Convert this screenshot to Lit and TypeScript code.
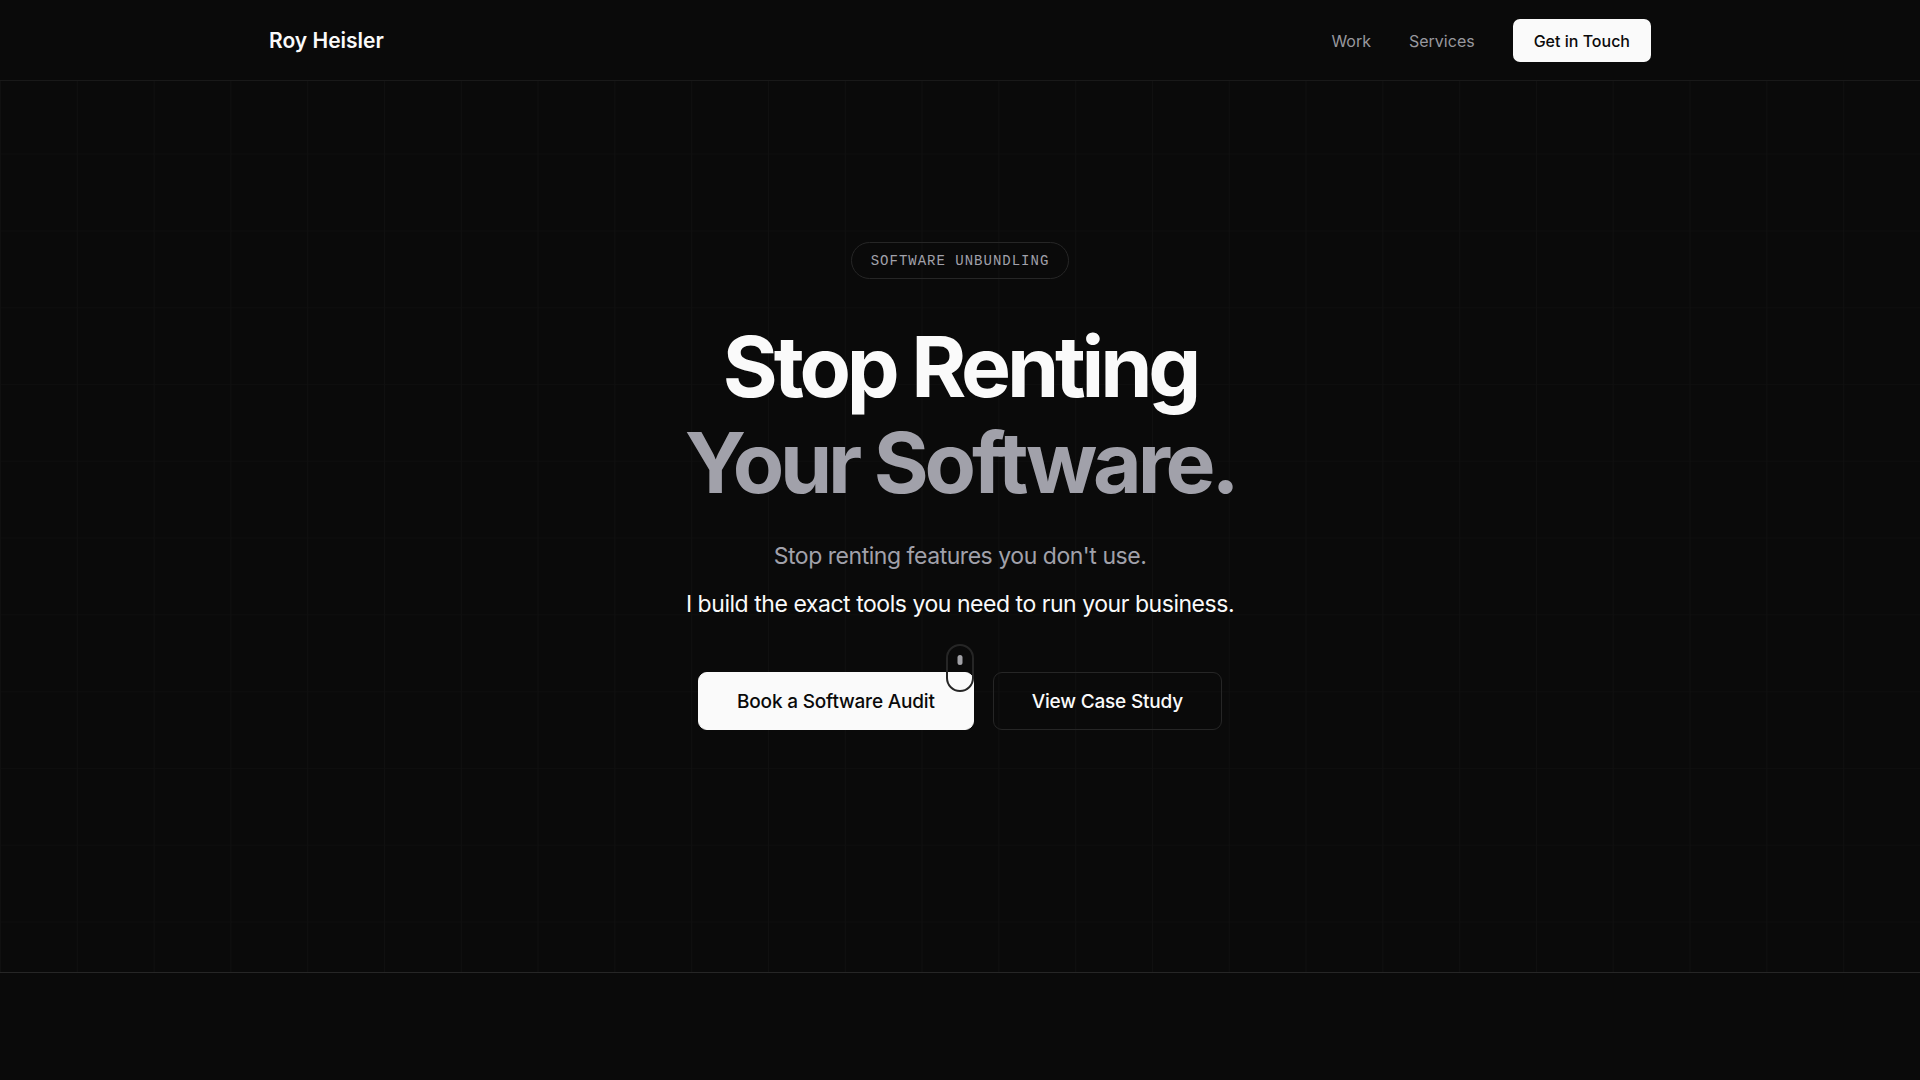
import { LitElement, html, css } from "lit";
import { customElement } from "lit/decorators.js";

@customElement("site-header")
class SiteHeader extends LitElement {
  static styles = css`
    :host {
      display: block;
      background: #0a0a0a;
      border-bottom: 1px solid #191919;
    }
    .bar {
      box-sizing: border-box;
      max-width: 1430px;
      margin: 0 auto;
      padding: 19px 24px 18px;
      display: flex;
      align-items: center;
      justify-content: space-between;
    }
    a {
      color: inherit;
      text-decoration: none;
    }
    .brand {
      font-size: 21px;
      line-height: 32px;
      font-weight: 600;
    }
    nav {
      display: flex;
      align-items: center;
      gap: 38px;
      font-size: 16px;
      line-height: 24px;
    }
    .link {
      color: #98989e;
    }
    .contact {
      padding: 10px 21px 9px;
      border-radius: 7px;
      background: #fafafa;
      color: #0a0a0a;
      font-weight: 500;
    }
  `;

  render() {
    return html`
      <header class="bar">
        <a class="brand" href="#">Roy Heisler</a>
        <nav aria-label="Main">
          <a class="link" href="#work">Work</a>
          <a class="link" href="#services">Services</a>
          <a class="contact" href="#contact">Get in Touch</a>
        </nav>
      </header>
    `;
  }
}

@customElement("hero-section")
class HeroSection extends LitElement {
  static styles = css`
    :host {
      box-sizing: border-box;
      min-height: calc(90vh + 1px);
      display: flex;
      align-items: center;
      justify-content: center;
      border-bottom: 1px solid #262626;
      background-image: linear-gradient(to right, #101010 1px, transparent 1px),
        linear-gradient(to bottom, #0e0e0e 1px, transparent 1px);
      background-size: 4vw 4vw;
    }
    .content {
      display: flex;
      flex-direction: column;
      align-items: center;
      text-align: center;
    }
    .tag {
      padding: 9px 19px 8px;
      border: 1px solid #262626;
      border-radius: 19px;
      color: #a1a1aa;
      font-family: "Liberation Mono", monospace;
      font-size: 14px;
      line-height: 18px;
      letter-spacing: 1px;
      text-transform: uppercase;
    }
    h1 {
      margin: 40px 0 0;
      font-size: 84px;
      line-height: 96px;
      font-weight: 700;
      letter-spacing: -0.05em;
    }
    .muted {
      display: block;
      color: #a1a1aa;
    }
    p {
      margin: 0;
      font-size: 23px;
      line-height: 48px;
      letter-spacing: -0.02em;
    }
    .lead {
      margin-top: 21px;
      color: #a1a1aa;
    }
    .actions {
      position: relative;
      display: flex;
      gap: 19px;
      margin-top: 44px;
    }
    .button {
      box-sizing: border-box;
      padding: 17px 38px 15px;
      border: 1px solid #262626;
      border-radius: 9px;
      color: #fafafa;
      font-size: 19px;
      line-height: 24px;
      font-weight: 500;
      letter-spacing: -0.01em;
      text-decoration: none;
    }
    .primary {
      border-color: #fafafa;
      background: #fafafa;
      color: #0a0a0a;
    }
    .mouse {
      position: absolute;
      left: 50%;
      top: -28px;
      width: 28px;
      height: 48px;
      margin-left: -14px;
      pointer-events: none;
    }
  `;

  render() {
    return html`
      <section class="content">
        <span class="tag">Software Unbundling</span>
        <h1>Stop Renting <span class="muted">Your Software.</span></h1>
        <p class="lead">Stop renting features you don't use.</p>
        <p>I build the exact tools you need to run your business.</p>
        <div class="actions">
          <a class="button primary" href="#contact">Book a Software Audit</a>
          <a class="button" href="#work">View Case Study</a>
          <svg class="mouse" viewBox="0 0 28 48" fill="none" aria-hidden="true">
            <rect x="1" y="1" width="26" height="46" rx="13" stroke="#262626" stroke-width="2" />
            <rect x="11.5" y="11" width="5" height="10" rx="2.5" fill="#a1a1a6" />
          </svg>
        </div>
      </section>
    `;
  }
}

@customElement("app-root")
class AppRoot extends LitElement {
  static styles = css`
    :host {
      display: block;
      min-height: 100vh;
      background: #0a0a0a;
      color: #fafafa;
      font-family: Inter, "Liberation Sans", sans-serif;
      -webkit-font-smoothing: antialiased;
    }
    .page {
      display: grid;
      grid-template-columns: minmax(0, 1fr);
    }
    site-header,
    hero-section {
      grid-area: 1 / 1;
    }
    site-header {
      align-self: start;
      z-index: 1;
    }
  `;

  render() {
    return html`
      <main class="page">
        <site-header></site-header>
        <hero-section></hero-section>
      </main>
    `;
  }
}
